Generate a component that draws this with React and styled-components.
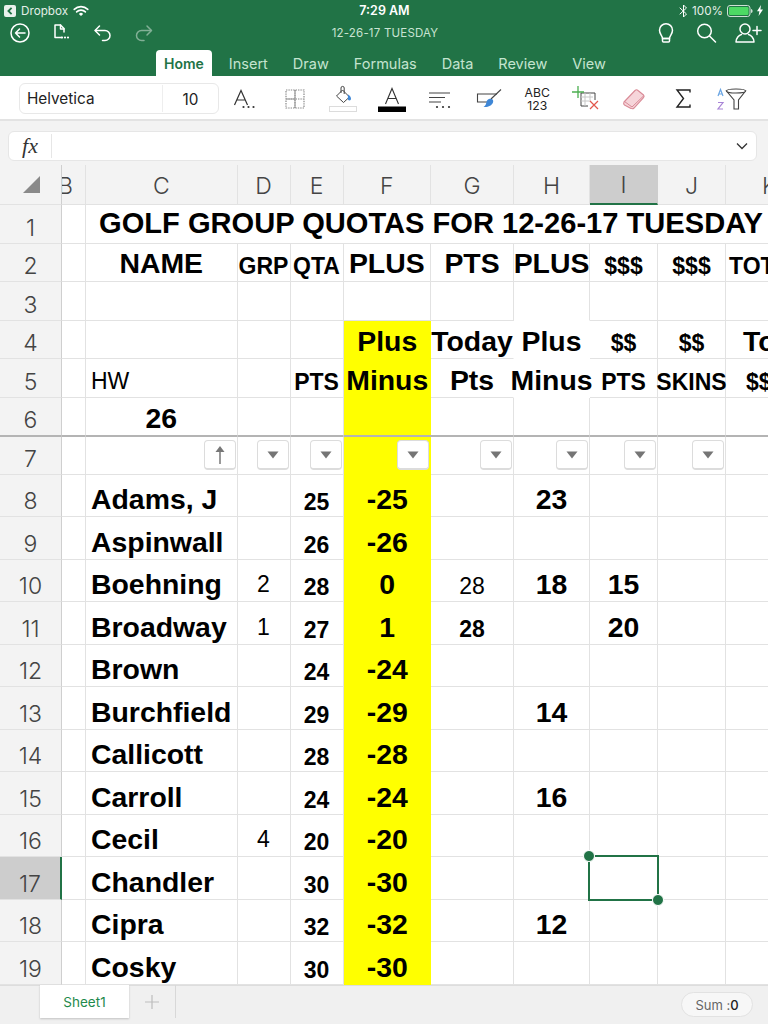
import React from 'react'
import styled, { createGlobalStyle, css } from 'styled-components'

const GREEN = '#217346'
const LINE = '#e2e2e2'
const FROZEN = '#b4b4b4'
const UI_FONT = '"Inter", "Liberation Sans", sans-serif'
const SHEET_FONT = '"Liberation Sans", Arial, sans-serif'

const Global = createGlobalStyle`
    html, body {
        margin: 0;
        padding: 0;
        background: #fff;
    }
    * {
        box-sizing: border-box;
    }
`

const Page = styled.div`
    width: 768px;
    height: 1024px;
    overflow: hidden;
    display: flex;
    flex-direction: column;
    font-family: ${UI_FONT};
    background: #fff;
`

const GreenHeader = styled.header`
    height: 76px;
    background: ${GREEN};
    display: flex;
    flex-direction: column;
    flex: none;
`

const StatusBar = styled.div`
    height: 20px;
    padding: 1px 5px 0 4px;
    display: grid;
    grid-template-columns: 1fr auto 1fr;
    align-items: center;
    color: #fff;
    font-size: 11.7px;
`

const StatusLeft = styled.div`
    display: flex;
    align-items: center;
    gap: 5px;
    color: #e4efe8;
`

const StatusRight = styled.div`
    display: flex;
    align-items: center;
    justify-content: flex-end;
    gap: 4px;
    color: #e4efe8;
`

const Clock = styled.div`
    font-weight: 600;
    font-size: 12.5px;
    padding-left: 2px;
`

const TitleRow = styled.div`
    height: 26px;
    margin-bottom: 4px;
    padding: 0 6px 0 8px;
    display: grid;
    grid-template-columns: 1fr auto 1fr;
    align-items: center;
`

const IconGroup = styled.div`
    display: flex;
    align-items: center;
    gap: ${p => (p.$end ? 16 : 17)}px;
    justify-content: ${p => (p.$end ? 'flex-end' : 'flex-start')};
`

const DocTitle = styled.div`
    color: #c9e3d2;
    font-size: 11.5px;
    letter-spacing: 0.2px;
`

const Tabs = styled.nav`
    height: 26px;
    padding-left: 156px;
    display: flex;
    align-items: stretch;
    gap: 9px;
`

const Tab = styled.div`
    padding: 0 8px;
    display: flex;
    align-items: center;
    font-size: ${p => (p.$active ? 14 : 14.5)}px;
    border-radius: 4px 4px 0 0;
    color: ${p => (p.$active ? GREEN : '#c4e4cf')};
    background: ${p => (p.$active ? '#fff' : 'transparent')};
    font-weight: ${p => (p.$active ? 600 : 400)};
`

const Toolbar = styled.div`
    height: 45px;
    flex: none;
    padding: 7px 0 0 19px;
    display: flex;
    align-items: flex-start;
    background: #fff;
    border-bottom: 2px solid #e3e3e3;
`

const FontBox = styled.div`
    width: 200px;
    height: 31px;
    margin-right: 3px;
    flex: none;
    display: flex;
    align-items: center;
    border: 1px solid #e8e8e8;
    border-radius: 6px;
    font-size: 15.3px;
    color: #222;
`

const FontName = styled.div`
    width: 143px;
    height: 27px;
    padding-left: 7px;
    display: flex;
    align-items: center;
    border-right: 1px solid #eeeeee;
`

const FontSize = styled.div`
    flex: 1;
    text-align: center;
    padding-top: 2px;
`

const ToolButton = styled.div`
    width: 48.5px;
    height: 32px;
    flex: none;
    display: flex;
    align-items: center;
    justify-content: center;
`

const FormulaArea = styled.div`
    height: 44px;
    flex: none;
    padding: 10px 11px 4px 8px;
    background: #f3f3f3;
`

const FormulaBox = styled.div`
    height: 30px;
    display: flex;
    align-items: center;
    background: #fff;
    border: 1px solid #e6e6e6;
    border-radius: 6px;
`

const FxLabel = styled.div`
    width: 43px;
    height: 24px;
    display: flex;
    align-items: center;
    justify-content: center;
    border-right: 1px solid #e6e6e6;
    font-family: "Liberation Serif", serif;
    font-style: italic;
    font-size: 22px;
    color: #333;
`

const FormulaInput = styled.div`
    flex: 1;
`

const Sheet = styled.div`
    height: 820px;
    flex: none;
    overflow: hidden;
    display: grid;
    grid-template-columns: 62px 24px 151.5px 53px 53px 87.5px 83px 76px 68px 68px 88px;
    grid-template-rows: 40px repeat(7, 38.5px) repeat(12, 42.5px);
    background: #fff;
    font-family: ${SHEET_FONT};
    color: #000;
`

const Corner = styled.div`
    background: #f3f3f3;
    border-right: 1px solid #cfcfcf;
    border-bottom: 1px solid ${LINE};
    display: flex;
    align-items: center;
    justify-content: center;
    padding: 0 0 0 1px;
`

const ColHead = styled.div`
    overflow: hidden;
    display: flex;
    align-items: center;
    justify-content: ${p => (p.$clipped ? 'flex-start' : 'center')};
    font-family: ${UI_FONT};
    font-weight: 300;
    font-size: 23px;
    color: #444;
    padding-top: 2px;
    background: ${p => (p.$selected ? '#cdcdcd' : '#f3f3f3')};
    border-right: 1px solid ${p => (p.$selected ? '#cdcdcd' : LINE)};
    border-bottom: ${p => (p.$selected ? `2px solid ${GREEN}` : `1px solid ${LINE}`)};
`

const ClippedLetter = styled.span`
    margin-left: -4px;
`

const RowHead = styled.div`
    display: flex;
    align-items: flex-end;
    justify-content: center;
    font-family: ${UI_FONT};
    font-weight: 300;
    font-size: 23px;
    line-height: 30px;
    color: #444;
    background: ${p => (p.$selected ? '#cdcdcd' : '#f3f3f3')};
    border-right: ${p => (p.$selected ? `2px solid ${GREEN}` : '1px solid #cfcfcf')};
    border-top: ${p => (p.$belowFrozen ? `1px solid ${FROZEN}` : '0')};
    border-bottom: 1px solid ${p => (p.$frozen ? FROZEN : LINE)};
`

const kinds = {
    lg: css`
        font-size: 28.4px;
        font-weight: 700;
    `,
    md: css`
        font-size: 23px;
        font-weight: 700;
    `,
    rg: css`
        font-size: 23px;
        font-weight: 400;
    `,
}

const bottomColor = p => {
    if (p.$frozen) return FROZEN
    return p.$noBottom || p.$yellow ? 'transparent' : LINE
}

const Cell = styled.div`
    position: relative;
    display: flex;
    align-items: flex-end;
    white-space: nowrap;
    justify-content: ${p => (p.$left !== undefined ? 'flex-start' : 'center')};
    padding-left: ${p => p.$left || 0}px;
    padding-bottom: ${p => p.$lift || 0}px;
    background: ${p => (p.$yellow ? '#ffff00' : 'transparent')};
    border-right: ${p => (p.$yellow ? '0' : `1px solid ${p.$noRight ? 'transparent' : LINE}`)};
    border-bottom: 1px solid ${bottomColor};
    ${p => kinds[p.$kind || 'lg']}
`

const TitleCell = styled(Cell)`
    grid-column: 3 / span 9;
    font-size: 29.1px;
`

const Inner = styled.span`
    display: block;
`

const FilterCell = styled(Cell)`
    align-items: center;
    justify-content: flex-end;
    padding-right: ${p => (p.$yellow ? 2 : 1)}px;
    border-top: 1px solid ${FROZEN};
    border-bottom: 1px solid ${p => (p.$yellow ? 'transparent' : LINE)};
`

const FilterButton = styled.div`
    width: 32px;
    height: 30px;
    display: flex;
    align-items: center;
    justify-content: center;
    background: #fff;
    border: 1px solid #dcdcdc;
    border-bottom-width: 2px;
    border-radius: 4px;
`

const Selection = styled.div`
    position: absolute;
    z-index: 2;
    left: -2px;
    top: -2px;
    right: -2px;
    bottom: -2px;
    border: 2px solid ${GREEN};
`

const Handle = styled.div`
    position: absolute;
    width: 12px;
    height: 12px;
    border-radius: 50%;
    background: ${GREEN};
    border: 1px solid #fff;
    ${p =>
        p.$start
            ? 'left: -7px; top: -7px;'
            : 'right: -7px; bottom: -7px;'}
`

const BottomBar = styled.footer`
    flex: 1;
    display: flex;
    align-items: flex-start;
    padding-left: 40px;
    background: #f0f0f0;
    box-shadow: inset 0 1px 0 #dddddd;
`

const SheetTab = styled.div`
    width: 89px;
    height: 33px;
    display: flex;
    align-items: center;
    justify-content: center;
    background: #fff;
    color: #1f8a4c;
    font-size: 13.5px;
    font-weight: 400;
    box-shadow: 0 1px 2px rgba(0, 0, 0, 0.2);
`

const AddSheet = styled.div`
    width: 47px;
    height: 33px;
    display: flex;
    align-items: center;
    justify-content: center;
    border-right: 1px solid #d8d8d8;
`

const SumPill = styled.div`
    margin: 7px 15px 0 auto;
    width: 72px;
    height: 25px;
    display: flex;
    align-items: center;
    justify-content: center;
    background: #f7f7f7;
    border: 1px solid #e2e2e2;
    border-radius: 13px;
    color: #666;
    font-size: 13px;
`

const SumValue = styled.span`
    color: #222;
    font-weight: 500;
`

const Icon = ({ w = 24, h = 24, vb, stroke = '#fff', sw = 1.5, children }) => (
    <svg
        width={w}
        height={h}
        viewBox={vb || `0 0 ${w} ${h}`}
        fill="none"
        stroke={stroke}
        strokeWidth={sw}
        strokeLinecap="round"
        strokeLinejoin="round"
    >
        {children}
    </svg>
)

const Dots = ({ x, y, gap = 4, fill = '#333' }) => (
    <g fill={fill} stroke="none">
        <circle cx={x} cy={y} r="1.1" />
        <circle cx={x + gap} cy={y} r="1.1" />
        <circle cx={x + gap * 2} cy={y} r="1.1" />
    </g>
)

const DropboxBack = () => (
    <svg width="12" height="12" viewBox="0 0 12 12">
        <rect width="12" height="12" rx="2" fill="#e9f1ec" />
        <path d="M7.6 2.8 4.4 6l3.2 3.2" fill="none" stroke={GREEN} strokeWidth="1.8" />
    </svg>
)

const Wifi = () => (
    <Icon w={16} h={12} sw={1.6}>
        <path d="M1.2 4.4a9.8 9.8 0 0 1 13.6 0" />
        <path d="M3.6 6.9a6.4 6.4 0 0 1 8.8 0" />
        <path d="M8 11 5.9 8.9a3 3 0 0 1 4.2 0Z" fill="#fff" stroke="none" />
    </Icon>
)

const Bluetooth = () => (
    <Icon w={9} h={14} sw={1}>
        <path d="M1 4l6.5 6L4.5 13V1l3 3L1 10" />
    </Icon>
)

const Battery = () => (
    <svg width="26" height="12" viewBox="0 0 26 12">
        <rect x="0.5" y="0.5" width="22.5" height="11" rx="2.5" fill="none" stroke="#cfe0d5" />
        <rect x="2" y="2" width="19.5" height="8" rx="1.2" fill="#4cd964" />
        <path d="M24 4v4c1 0 1.6-1 1.6-2S25 4 24 4Z" fill="#cfe0d5" />
    </svg>
)

const Bolt = () => (
    <svg width="6" height="11" viewBox="0 0 6 11">
        <path d="M4 0 0 6.2h2.4L1.6 11 6 4.4H3.4Z" fill="#fff" />
    </svg>
)

const BackCircle = () => (
    <Icon>
        <circle cx="12" cy="12" r="9" />
        <path d="M17 12H7.5M11.5 8 7.5 12l4 4" />
    </Icon>
)

const DocDots = () => (
    <Icon>
        <path d="M13 16.5H6V4h5.5L15 7.5V11" />
        <path d="M11.5 4v4H15" />
        <Dots x={13} y={16.5} gap={3} fill="#fff" />
    </Icon>
)

const Undo = () => (
    <Icon>
        <path d="M9.5 5 5 9.5 9.500 14" />
        <path d="M5.500 9.500H15a5 5 0 0 1 0 10h-2.500" />
    </Icon>
)

const Redo = () => (
    <Icon stroke="#82b096">
        <path d="M16 5l4.5 4.5L16 14" />
        <path d="M20 9.5h-9.5a5 5 0 0 0 0 10H13" />
    </Icon>
)

const Bulb = () => (
    <Icon>
        <path d="M8.5 17.5c0-3-3-4.2-3-8.3a6.5 6.5 0 0 1 13 0c0 4.100-3 5.300-3 8.300Z" />
        <path d="M9.500 21h5a1 1 0 0 0 1-1v-2.500h-7V20a1 1 0 0 0 1 1Z" />
    </Icon>
)

const Search = () => (
    <Icon>
        <circle cx="10.500" cy="10" r="6.800" />
        <path d="M15.500 15l6 6" />
    </Icon>
)

const AddPerson = () => (
    <Icon w={28} h={24}>
        <circle cx="11" cy="8" r="5" />
        <path d="M2 21c0-4 3-7 5.500-7.500M20 21c0-4-3-7-5.500-7.500M2 21h18" />
        <path d="M19 9.500h8M23 5.500v8" />
    </Icon>
)

const FontLetter = () => (
    <svg width="26" height="24" viewBox="0 0 26 24">
        <path d="M1.500 18 8 3.500 14.500 18M4 13h8" fill="none" stroke="#333" strokeWidth="1.200" />
        <Dots x={10.500} y={20} gap={5} />
    </svg>
)

const Borders = () => (
    <svg width="20" height="20" viewBox="0 0 20 20">
        <path
            d="M1 1h18v18H1ZM1 10h18M10 1v18"
            fill="none"
            stroke="#888"
            strokeWidth="1.200"
            strokeDasharray="1.400 1"
        />
        <path d="M10 1v18M1 10h9" fill="none" stroke="#999" strokeWidth="1" />
    </svg>
)

const FillColor = () => (
    <svg width="30" height="28" viewBox="0 0 30 28">
        <path d="M8.500 11 14.500 5l7 7-6 5.500Z" fill="none" stroke="#444" strokeWidth="1" />
        <path d="M13 8V3a1.600 1.600 0 0 1 3.200 0v6" fill="none" stroke="#444" strokeWidth="1" />
        <path d="M20 9.500c1.600 1 3 2.500 3 4.300a1.600 1.600 0 0 1-3.200 0Z" fill="#3f87d6" />
        <rect x="1.500" y="21.500" width="27" height="5" fill="#fff" stroke="#dcdcdc" />
    </svg>
)

const FontColor = () => (
    <svg width="30" height="28" viewBox="0 0 30 28">
        <path d="M8.500 19 15 3.500 21.500 19M11 13.500h8" fill="none" stroke="#333" strokeWidth="1.100" />
        <rect x="1" y="21.500" width="28" height="5.500" fill="#000" />
    </svg>
)

const AlignLines = () => (
    <svg width="24" height="20" viewBox="0 0 24 20">
        <path d="M1 4h21M1 8.500h16M1 13h12" stroke="#444" strokeWidth="1.100" />
        <Dots x={9} y={18} gap={6} fill="#333" />
    </svg>
)

const Brush = () => (
    <svg width="28" height="22" viewBox="0 0 28 22">
        <path d="M16 14H2.500V6H22" fill="none" stroke="#444" strokeWidth="1.100" />
        <path d="M26 1.500 16 11" stroke="#444" strokeWidth="1.100" />
        <path d="M14 11c3-1 5 1 4 3.500-1.100 3-5 5-9.500 4.500 2-1 2.500-3 3-5 .3-1.400 1-2.500 2.500-3Z" fill="#3f87d6" />
    </svg>
)

const NumberFormatLabel = styled.div`
    font-size: 12.200px;
    line-height: 13px;
    text-align: center;
    color: #222;
`

const TableDelete = () => (
    <svg width="28" height="26" viewBox="0 0 28 26">
        <path d="M9 7h14v7M9 7v13h7" fill="none" stroke="#444" strokeWidth="1" />
        <path d="M9 11h12M9 15h8M13 7v13M18 7v9" stroke="#c8c8c8" strokeWidth="1" />
        <path d="M6 0v12M0 6h12" stroke="#4caf50" strokeWidth="1.300" />
        <path d="M18 15l8 8M26 15l-8 8" stroke="#e2574c" strokeWidth="1.200" />
    </svg>
)

const Eraser = () => (
    <svg width="24" height="24" viewBox="0 0 24 24">
        <path d="M2 15 13 3.500c1-1 2-1 3 0l5.500 4.500c.8.800.8 1.800 0 2.700L12 21c-1 1-2 1-3 .4L2.500 18c-1-.8-1-2-.5-3Z" fill="#f6d5da" stroke="#d98a96" strokeWidth="1.100" />
        <path d="M2.500 14.500 10 20l12-11.500" fill="none" stroke="#d98a96" strokeWidth="1" />
    </svg>
)

const SumGlyph = () => (
    <svg width="16" height="20" viewBox="0 0 16 20">
        <path d="M15 3.500V1H2l6.500 8.500L2 18h13v-2.500" fill="none" stroke="#222" strokeWidth="1.400" />
    </svg>
)

const SortFilter = () => (
    <svg width="32" height="24" viewBox="0 0 32 24">
        <path d="M3 9 5.500 2.500 8 9M3.800 7h3.400" fill="none" stroke="#6aa5e3" strokeWidth="1.200" />
        <path d="M3 15.500h5L3 22h5" fill="none" stroke="#a884d6" strokeWidth="1.200" />
        <path d="M11.500 4h19L23.500 13v9h-4.500V13Z" fill="none" stroke="#444" strokeWidth="1.100" />
        <ellipse cx="21" cy="4" rx="9.500" ry="2" fill="#fff" stroke="#444" strokeWidth="1.100" />
    </svg>
)

const Chevron = styled.svg`
    margin: 0 8px 0 auto;
`

const ArrowUp = () => (
    <svg width="10" height="18" viewBox="0 0 10 18">
        <path d="M5 4.500V18" stroke="#777" strokeWidth="1.500" />
        <path d="M5 0 9.500 6h-9Z" fill="#777" />
    </svg>
)

const ArrowDown = () => (
    <svg width="12" height="8" viewBox="0 0 12 8">
        <path d="M0.500 0.500h11L6 7.500Z" fill="#757575" />
    </svg>
)

const COLUMNS = ['B', 'C', 'D', 'E', 'F', 'G', 'H', 'I', 'J', 'K']
const TAB_NAMES = ['Home', 'Insert', 'Draw', 'Formulas', 'Data', 'Review', 'View']

// rows 2 to 6, one entry per column B..K
const topRows = [
    {
        n: 2,
        cells: [
            {},
            { t: 'NAME', lift: 1 },
            { t: 'GRP', kind: 'md', lift: 1 },
            { t: 'QTA', kind: 'md', lift: 1 },
            { t: 'PLUS', lift: 1 },
            { t: 'PTS', lift: 1 },
            { t: 'PLUS', lift: 1 },
            { t: '$$$', kind: 'md', lift: 1 },
            { t: '$$$', kind: 'md', lift: 1 },
            { t: 'TOTAL', kind: 'md', left: 3, lift: 1 },
        ],
    },
    {
        n: 3,
        cells: [{}, {}, {}, {}, {}, {}, { noBottom: true }, {}, {}, {}],
    },
    {
        n: 4,
        cells: [
            {},
            {},
            {},
            {},
            { t: 'Plus', yellow: true },
            { t: 'Today', noRight: true },
            { t: 'Plus', noRight: true, noBottom: true },
            { t: '$$', kind: 'md', lift: 1 },
            { t: '$$', kind: 'md', lift: 1 },
            { t: 'Total', left: 17 },
        ],
    },
    {
        n: 5,
        cells: [
            {},
            { t: 'HW', kind: 'rg', left: 5, lift: 2 },
            {},
            { t: 'PTS', kind: 'md', lift: 1 },
            { t: 'Minus', yellow: true },
            { t: 'Pts', noRight: true },
            { t: 'Minus', noRight: true, noBottom: true },
            { t: 'PTS', kind: 'md', lift: 1 },
            { t: 'SKINS', kind: 'md', lift: 1 },
            { t: '$$$$', kind: 'md', left: 20, lift: 1 },
        ],
    },
    {
        n: 6,
        frozen: true,
        cells: [{}, { t: '26' }, {}, {}, { yellow: true }, {}, {}, {}, {}, {}],
    },
]

const players = [
    { n: 8, name: 'Adams, J', qta: 25, plus: -25, h: 23 },
    { n: 9, name: 'Aspinwall', qta: 26, plus: -26 },
    { n: 10, name: 'Boehning', grp: 2, qta: 28, plus: 0, g: { t: 28, kind: 'rg', lift: 1 }, h: 18, i: 15 },
    { n: 11, name: 'Broadway', grp: 1, qta: 27, plus: 1, g: { t: 28, kind: 'md', lift: 1 }, i: 20 },
    { n: 12, name: 'Brown', qta: 24, plus: -24 },
    { n: 13, name: 'Burchfield', qta: 29, plus: -29, h: 14 },
    { n: 14, name: 'Callicott', qta: 28, plus: -28 },
    { n: 15, name: 'Carroll', qta: 24, plus: -24, h: 16 },
    { n: 16, name: 'Cecil', grp: 4, qta: 20, plus: -20 },
    { n: 17, name: 'Chandler', qta: 30, plus: -30, selected: true },
    { n: 18, name: 'Cipra', qta: 32, plus: -32, h: 12 },
    { n: 19, name: 'Cosky', qta: 30, plus: -30 },
]

const filterColumns = [
    { c: 'B', off: true },
    { c: 'C', up: true },
    { c: 'D' },
    { c: 'E' },
    { c: 'F', yellow: true },
    { c: 'G' },
    { c: 'H' },
    { c: 'I' },
    { c: 'J' },
    { c: 'K', off: true },
]

const renderCell = (cell, key, frozen) => (
    <Cell
        key={key}
        $kind={cell.kind}
        $left={cell.left}
        $lift={cell.lift}
        $yellow={cell.yellow}
        $noRight={cell.noRight}
        $noBottom={cell.noBottom}
        $frozen={frozen}
    >
        {cell.t !== undefined && <Inner>{cell.t}</Inner>}
        {cell.selection && (
            <Selection>
                <Handle $start />
                <Handle />
            </Selection>
        )}
    </Cell>
)

const playerCells = p => [
    {},
    { t: p.name, left: 5 },
    { t: p.grp, kind: 'rg', lift: 3 },
    { t: p.qta, kind: 'md' },
    { t: p.plus, yellow: true },
    p.g || {},
    { t: p.h },
    { t: p.i, selection: p.selected },
    {},
    {},
]

export default function App() {
    return (
        <Page>
            <Global />
            <GreenHeader>
                <StatusBar>
                    <StatusLeft>
                        <DropboxBack />
                        <span>Dropbox</span>
                        <Wifi />
                    </StatusLeft>
                    <Clock>7:29 AM</Clock>
                    <StatusRight>
                        <Bluetooth />
                        <span>100%</span>
                        <Battery />
                        <Bolt />
                    </StatusRight>
                </StatusBar>
                <TitleRow>
                    <IconGroup>
                        <BackCircle />
                        <DocDots />
                        <Undo />
                        <Redo />
                    </IconGroup>
                    <DocTitle>12-26-17 TUESDAY</DocTitle>
                    <IconGroup $end>
                        <Bulb />
                        <Search />
                        <AddPerson />
                    </IconGroup>
                </TitleRow>
                <Tabs>
                    {TAB_NAMES.map((name, i) => (
                        <Tab key={name} $active={i === 0}>
                            {name}
                        </Tab>
                    ))}
                </Tabs>
            </GreenHeader>

            <Toolbar>
                <FontBox>
                    <FontName>Helvetica</FontName>
                    <FontSize>10</FontSize>
                </FontBox>
                <ToolButton><FontLetter /></ToolButton>
                <ToolButton><Borders /></ToolButton>
                <ToolButton><FillColor /></ToolButton>
                <ToolButton><FontColor /></ToolButton>
                <ToolButton><AlignLines /></ToolButton>
                <ToolButton><Brush /></ToolButton>
                <ToolButton>
                    <NumberFormatLabel>ABC<br />123</NumberFormatLabel>
                </ToolButton>
                <ToolButton><TableDelete /></ToolButton>
                <ToolButton><Eraser /></ToolButton>
                <ToolButton><SumGlyph /></ToolButton>
                <ToolButton><SortFilter /></ToolButton>
            </Toolbar>

            <FormulaArea>
                <FormulaBox>
                    <FxLabel>fx</FxLabel>
                    <FormulaInput />
                    <Chevron width="12" height="8" viewBox="0 0 12 8" fill="none" stroke="#333" strokeWidth="1.300">
                        <path d="M1 1.500 6 6.500l5-5" />
                    </Chevron>
                </FormulaBox>
            </FormulaArea>

            <Sheet>
                <Corner>
                    <svg width="17" height="17" viewBox="0 0 17 17">
                        <path d="M17 0v17H0Z" fill="#8a8a8a" />
                    </svg>
                </Corner>
                {COLUMNS.map(c => (
                    <ColHead key={c} $selected={c === 'I'} $clipped={c === 'B'}>
                        {c === 'B' ? <ClippedLetter>B</ClippedLetter> : c}
                    </ColHead>
                ))}

                <RowHead>1</RowHead>
                <Cell />
                <TitleCell $left={13} $lift={3}>
                    <Inner>GOLF GROUP QUOTAS FOR 12-26-17 TUESDAY</Inner>
                </TitleCell>

                {topRows.map(row => (
                    <React.Fragment key={row.n}>
                        <RowHead $frozen={row.frozen}>{row.n}</RowHead>
                        {row.cells.map((cell, i) => renderCell(cell, i, row.frozen))}
                    </React.Fragment>
                ))}

                <RowHead $belowFrozen>7</RowHead>
                {filterColumns.map(f => (
                    <FilterCell key={f.c} $yellow={f.yellow}>
                        {!f.off && (
                            <FilterButton>{f.up ? <ArrowUp /> : <ArrowDown />}</FilterButton>
                        )}
                    </FilterCell>
                ))}

                {players.map(p => (
                    <React.Fragment key={p.n}>
                        <RowHead $selected={p.selected}>{p.n}</RowHead>
                        {playerCells(p).map((cell, i) => renderCell(cell, i))}
                    </React.Fragment>
                ))}
            </Sheet>

            <BottomBar>
                <SheetTab>Sheet1</SheetTab>
                <AddSheet>
                    <svg width="14" height="14" viewBox="0 0 14 14">
                        <path d="M7 0v14M0 7h14" stroke="#bdbdbd" strokeWidth="1.200" />
                    </svg>
                </AddSheet>
                <SumPill>
                    Sum :<SumValue>0</SumValue>
                </SumPill>
            </BottomBar>
        </Page>
    )
}
